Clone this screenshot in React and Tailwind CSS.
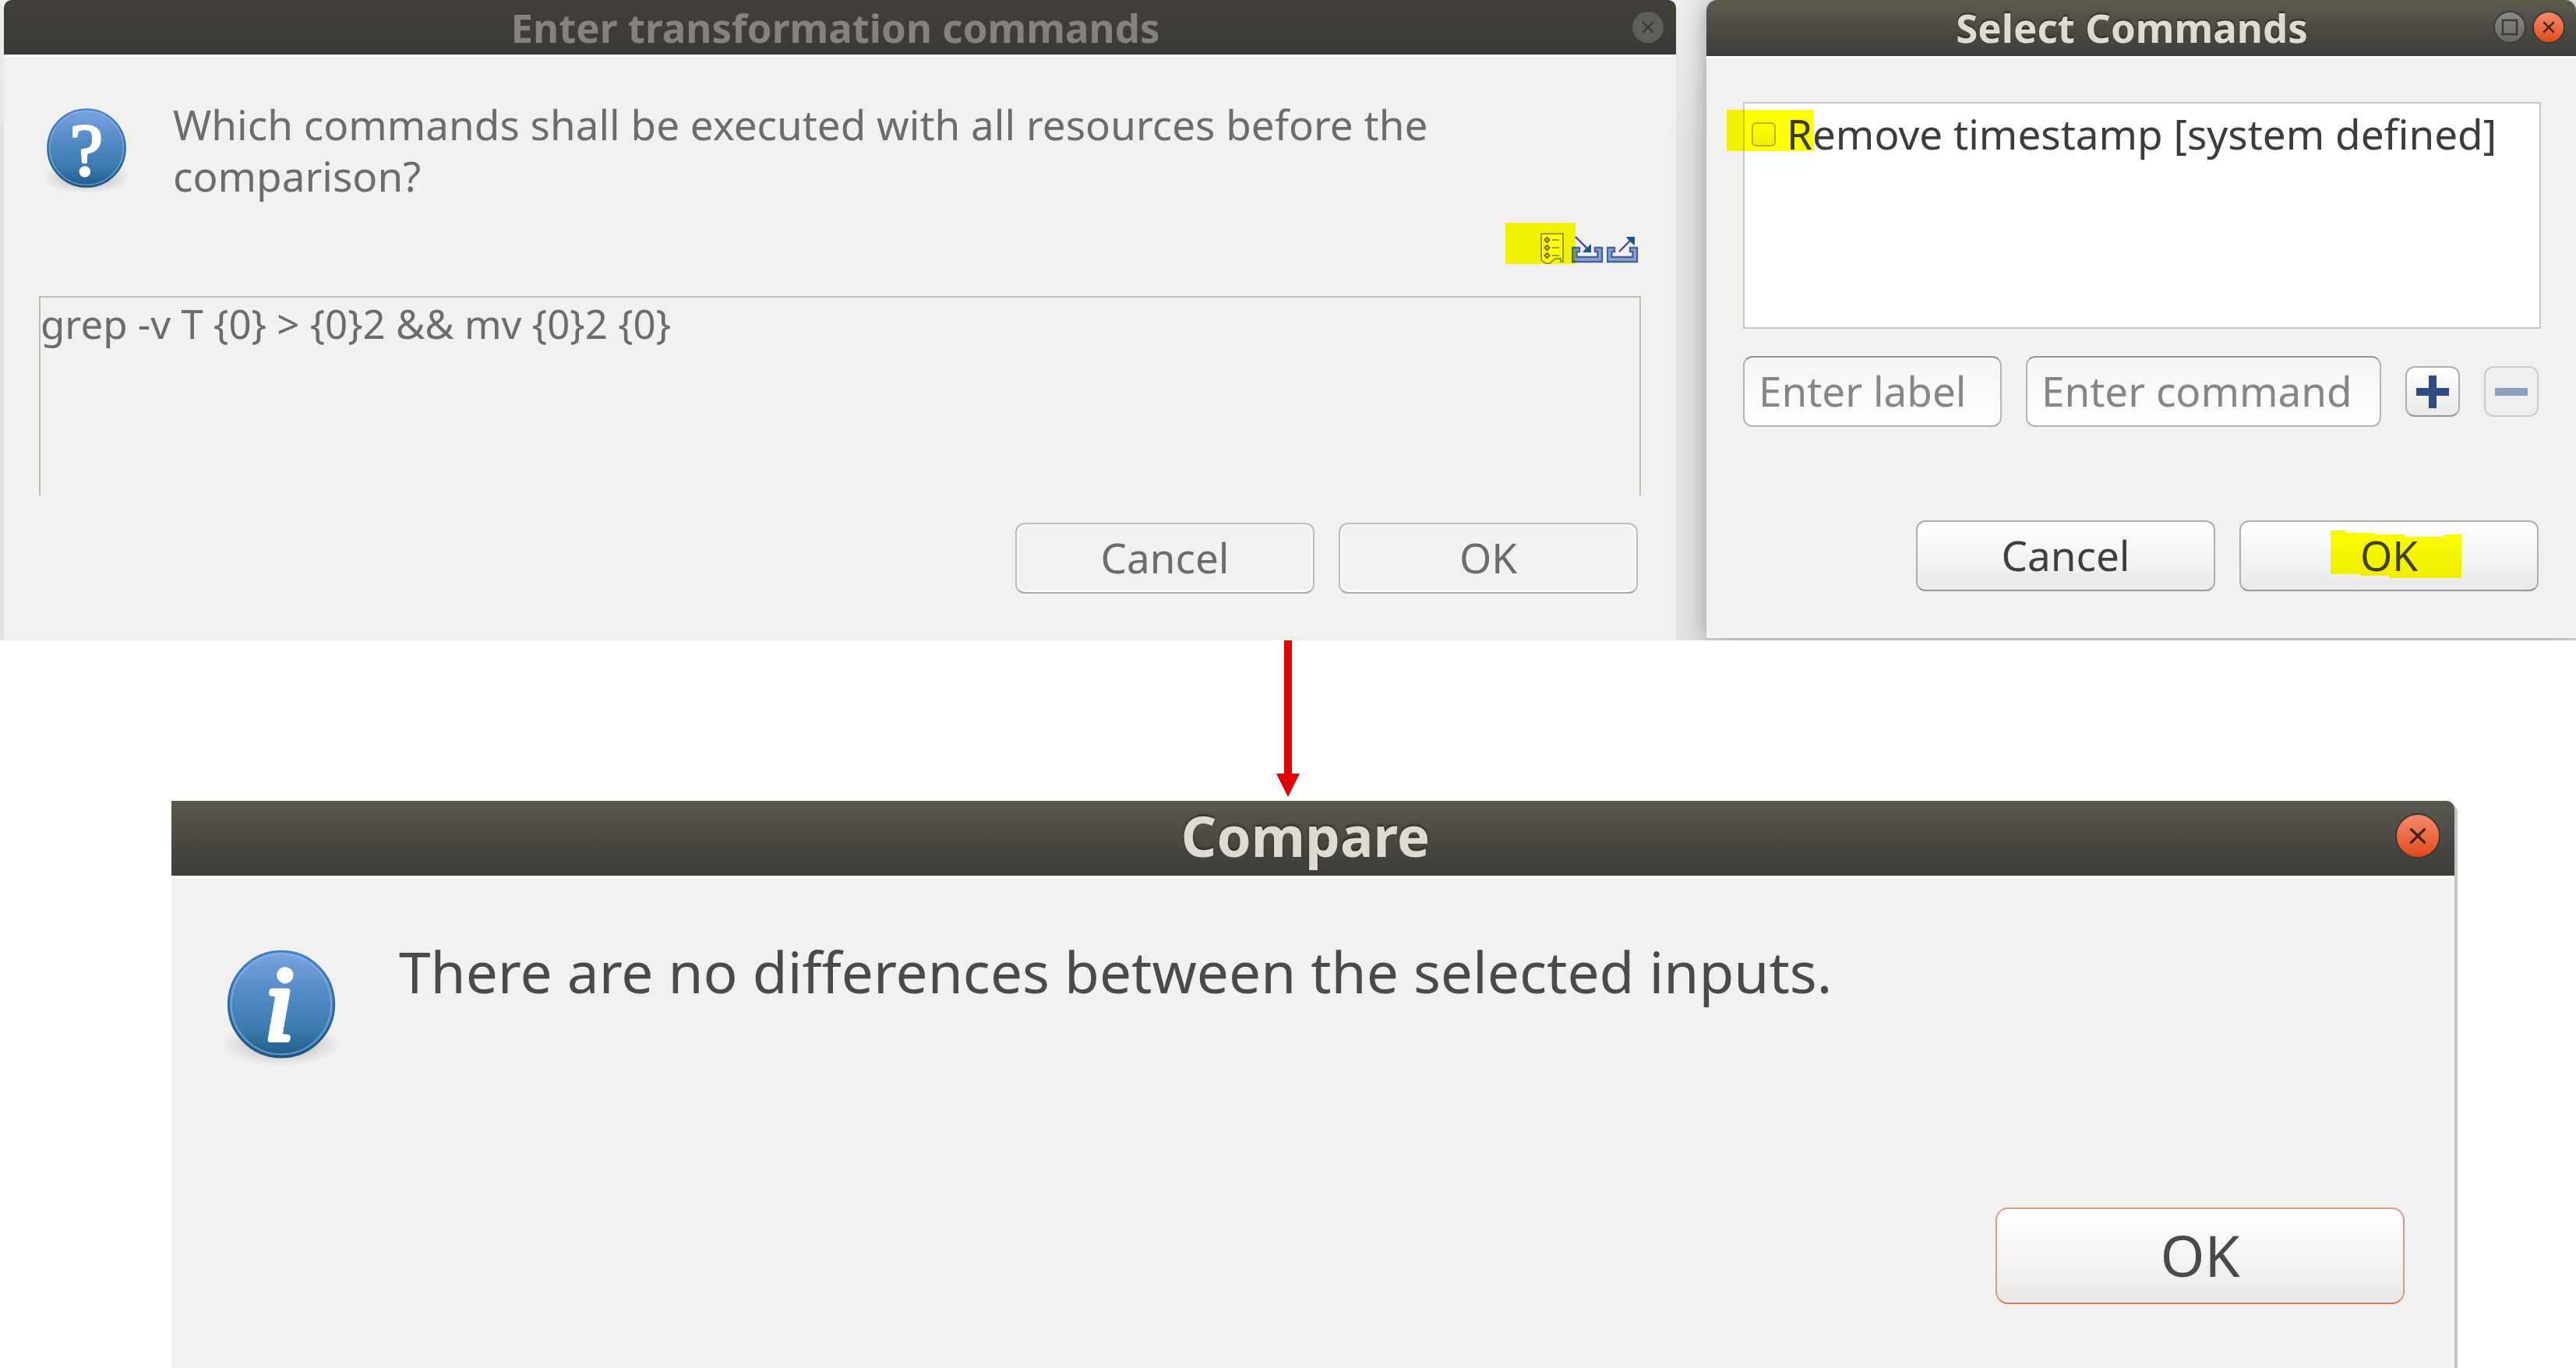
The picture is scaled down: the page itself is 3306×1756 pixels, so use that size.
const highlight = "pointer-events-none absolute bg-[#ffff00] mix-blend-multiply";

function CloseButton({ className, cross }) {
  return (
    <button type="button" aria-label="Close" className={`shrink-0 rounded-full ${className}`}>
      <svg viewBox="0 0 40 40" className="block size-full" fill="none" stroke={cross} strokeWidth="2.4">
        <path d="M13 13 27 27M27 13 13 27" />
      </svg>
    </button>
  );
}

function MaximizeButton() {
  return (
    <button
      type="button"
      aria-label="Maximize"
      className="size-[42px] shrink-0 rounded-full border-2 border-[#3a3934] bg-linear-to-b from-[#8b8a84] to-[#66655f]"
    >
      <svg viewBox="0 0 38 38" className="block size-full" fill="none" stroke="#3a3934" strokeWidth="2.4">
        <rect x="10" y="10" width="18" height="18" />
      </svg>
    </button>
  );
}

function Badge({ id, glyph, className, size, x, y, style, outline }) {
  return (
    <svg viewBox="0 0 120 120" className={`shrink-0 ${className}`} aria-hidden="true">
      <defs>
        <linearGradient id={`${id}-fill`} x1="0" y1="0" x2="0" y2="1">
          <stop offset="0" stopColor="#7ba2e0" />
          <stop offset="0.45" stopColor="#4f88c2" />
          <stop offset="0.75" stopColor="#3a79ae" />
          <stop offset="1" stopColor="#1f5b8a" />
        </linearGradient>
        <linearGradient id={`${id}-rim`} x1="0" y1="0" x2="0" y2="1">
          <stop offset="0" stopColor="#3f7fc4" />
          <stop offset="1" stopColor="#1d5583" />
        </linearGradient>
        <radialGradient id={`${id}-shadow`}>
          <stop offset="0.5" stopColor="#000000" stopOpacity="0.14" />
          <stop offset="1" stopColor="#000000" stopOpacity="0" />
        </radialGradient>
      </defs>
      <ellipse cx="60" cy="97" rx="55" ry="20" fill={`url(#${id}-shadow)`} />
      <circle cx="60" cy="60" r="49" fill={`url(#${id}-fill)`} stroke={`url(#${id}-rim)`} strokeWidth="2" />
      <circle cx="60" cy="60" r="46.5" fill="none" stroke="#8db8e6" strokeOpacity="0.6" strokeWidth="1.5" />
      <text
        x={x}
        y={y}
        fontFamily="'Liberation Serif', serif"
        fontSize={size}
        fontStyle={style}
        textAnchor="middle"
        fill="#ffffff"
        stroke="#ffffff"
        strokeLinejoin="round"
        strokeWidth={outline}
      >
        {glyph}
      </text>
    </svg>
  );
}

function ListIcon() {
  return (
    <svg viewBox="0 0 42 42" className="block size-[42px]" fill="none" stroke="#9c9c90" strokeWidth="2">
      <path d="M6 37V3H34V39H31V35H24L20 38 17 41H12L6 37" fill="#ffffff" />
      {[11, 21, 31].map((cy) => (
        <g key={cy}>
          <path d={`M13.500 ${cy - 3}l3 3-3 3-3-3Z`} stroke="#6b6b60" strokeWidth="2" />
          <path d={`M20 ${cy}H29`} />
        </g>
      ))}
    </svg>
  );
}

function TrayIcon({ children }) {
  return (
    <svg viewBox="0 0 42 42" className="block size-[42px]">
      <path
        d="M1 21H10V26H6.500V33H33.500V26H30V21H39V39H1Z"
        fill="#8ba5d2"
        stroke="#45629f"
        strokeWidth="2.4"
      />
      {children}
    </svg>
  );
}

function PushButton({ children, className }) {
  return (
    <button type="button" className={`relative flex items-center justify-center border-2 ${className}`}>
      {children}
    </button>
  );
}

const dialogButton = "h-[91px] w-[384px] rounded-[12px] pb-[2px] text-[53px] leading-[66px]";
const activeFace = "border-[#b0afad] border-b-[#999896] bg-linear-to-b from-white to-[#eae9e8] text-[#3f3f3f]";
const idleFace = "border-[#bdbcba] border-b-[#a9a8a6] bg-[#f2f1f0] text-[#6c6c6c] shadow-[inset_0_0_0_3px_#f9f9f8]";
const field =
  "h-[91px] w-0 min-w-0 rounded-[12px] border-2 border-[#b5b4b2] border-t-[#949391] bg-linear-to-b from-[#f4f4f4] to-white pr-[8px] pb-[2px] pl-[18px] text-[53px] leading-[66px] text-[#3f3f3f] placeholder:text-[#868686]";

function TransformationDialog() {
  return (
    <section className="flex flex-col bg-[#f2f1ef]">
      <header className="flex h-[73px] items-center rounded-t-[10px] border-b-[3px] border-white bg-linear-to-b from-[#423f3a] to-[#3b3a36] bg-clip-padding pr-[16px] pl-[44px]">
        <h2 className="flex-1 text-center text-[51px] leading-[70px] font-bold text-[#85827b]">
          Enter transformation commands
        </h2>
        <CloseButton className="size-[40px] bg-[#5f5e58]" cross="#3a3934" />
      </header>
      <div className="flex flex-1 flex-col px-[45px] pt-[54px] pb-[60px]">
        <div className="flex items-start">
          <Badge id="question" glyph="?" className="mt-[2px] size-[122px]" size="94" x="60" y="94" outline="3" />
          <p className="ml-[50px] max-w-[1700px] text-[53px] leading-[66px] text-[#6c6c6c]">
            Which commands shall be executed with all resources before the comparison?
          </p>
        </div>
        <div className="relative mt-[27px] flex h-[53px] items-end justify-end gap-[3px] pr-[2px]">
          <button type="button" aria-label="Select commands">
            <ListIcon />
          </button>
          <button type="button" aria-label="Import commands">
            <TrayIcon>
              <path d="M5 7 20 22" stroke="#4a48a4" strokeWidth="2.4" />
              <path d="M25 16V27H14L18 22 21 20Z" fill="#0c5a9c" />
            </TrayIcon>
          </button>
          <button type="button" aria-label="Export commands">
            <TrayIcon>
              <path d="M16 26 30 12" stroke="#4a48a4" strokeWidth="2.4" />
              <path d="M25 7H36V18L32 15 28 11Z" fill="#0c5a9c" />
            </TrayIcon>
          </button>
          <span className={`${highlight} top-0 right-[84px] h-[53px] w-[90px]`} />
        </div>
        <textarea
          aria-label="Transformation commands"
          defaultValue="grep -v T {0} > {0}2 && mv {0}2 {0}"
          className="mt-[41px] block h-[256px] w-full resize-none border-2 border-b-0 border-[#bfbebb] bg-transparent text-[51px] leading-[66px] text-[#6c6c6c]"
        />
        <div className="mt-[35px] flex justify-end gap-[31px] pr-[4px]">
          <PushButton className={`${dialogButton} ${idleFace}`}>Cancel</PushButton>
          <PushButton className={`${dialogButton} ${idleFace}`}>OK</PushButton>
        </div>
      </div>
    </section>
  );
}

function SelectDialog() {
  return (
    <section className="mb-[3px] flex flex-col rounded-t-[14px] bg-[#f2f1ef] shadow-[0_2px_30px_2px_#a0a0a0]">
      <header className="flex h-[75px] items-center gap-[8px] rounded-t-[14px] border-b-[3px] border-white bg-linear-to-b from-[#5d5a50] to-[#3e3d38] bg-clip-padding pr-[14px] pb-[2px] pl-[90px]">
        <h2 className="flex-1 text-center text-[51px] leading-[70px] font-bold text-[#dfdbd2] [text-shadow:0_-2px_2px_#2b2a26]">
          Select Commands
        </h2>
        <MaximizeButton />
        <CloseButton
          className="size-[42px] border-2 border-[#3a3934] bg-linear-to-b from-[#f58a69] to-[#df4a16]"
          cross="#43200f"
        />
      </header>
      <div className="flex flex-1 flex-col pt-[56px] pr-[45px] pb-[60px] pl-[47px]">
        <div className="relative h-[291px] border-2 border-[#c8c7c4] bg-white pt-[6px] pl-[9px]">
          <label className="flex items-center gap-[14px] text-[53px] leading-[66px] whitespace-nowrap text-[#3c3c3c]">
            <input
              type="checkbox"
              className="size-[31px] shrink-0 appearance-none rounded-[6px] border-2 border-[#b4b4b0] bg-linear-to-b from-white to-[#f0f0f0]"
            />
            Remove timestamp [system defined]
          </label>
          <span className={`${highlight} top-[8px] left-[-23px] h-[53px] w-[112px]`} />
        </div>
        <div className="mt-[35px] flex items-center gap-[31px] pr-[3px]">
          <input type="text" aria-label="Label" placeholder="Enter label" className={`${field} flex-[302]`} />
          <input type="text" aria-label="Command" placeholder="Enter command" className={`${field} flex-[426]`} />
          <button
            type="button"
            aria-label="Add command"
            className="flex h-[65px] w-[70px] shrink-0 items-center justify-center rounded-[12px] border-2 border-[#b0afad] border-b-[#999896] bg-linear-to-b from-white to-[#eae9e8]"
          >
            <svg viewBox="0 0 42 42" className="size-[42px]" fill="#2f4b85">
              <path d="M16 0h10v16h16v10H26v16H16V26H0V16h16Z" />
            </svg>
          </button>
          <button
            type="button"
            aria-label="Remove command"
            className="flex h-[65px] w-[70px] shrink-0 items-center justify-center rounded-[12px] border-2 border-[#cdcccb] bg-[#eeeeee]"
          >
            <svg viewBox="0 0 42 42" className="size-[42px]" fill="#92a0bf">
              <path d="M0 16h42v10H0Z" />
            </svg>
          </button>
        </div>
        <div className="mt-[120px] flex justify-end gap-[31px] pr-[3px]">
          <PushButton className={`${dialogButton} ${activeFace}`}>Cancel</PushButton>
          <PushButton className={`${dialogButton} ${activeFace}`}>
            OK
            <svg
              viewBox="0 0 168 61"
              className="pointer-events-none absolute top-[11px] left-[115px] h-[61px] w-[168px] mix-blend-multiply"
              fill="#ffff00"
              aria-hidden="true"
            >
              <path d="M0 0H20V3H57V5H95V8H146V5H168V61H75V58H38V56H0Z" />
            </svg>
          </PushButton>
        </div>
      </div>
    </section>
  );
}

function CompareDialog() {
  return (
    <section className="mr-[156px] ml-[220px] flex flex-1 flex-col rounded-tr-[10px] bg-[#f2f1ef] shadow-[4px_4px_0_0_#c4c4c4]">
      <header className="flex h-[100px] items-center rounded-tr-[10px] border-b-4 border-white bg-linear-to-b from-[#5b584f] to-[#3d3c37] bg-clip-padding pr-[18px] pb-[7px] pl-[57px]">
        <h2 className="flex-1 text-center text-[71px] leading-[88px] font-bold text-[#dfdbd2] [text-shadow:0_-2px_3px_#2b2a26]">
          Compare
        </h2>
        <CloseButton
          className="size-[58px] border-2 border-[#3a3934] bg-linear-to-b from-[#f58a69] to-[#df4a16]"
          cross="#43200f"
        />
      </header>
      <div className="flex flex-1 flex-col pt-[75px] pr-[64px] pb-[82px] pl-[58px]">
        <div className="flex items-start">
          <Badge
            id="info"
            glyph="i"
            className="mt-[3px] size-[166px]"
            size="98"
            x="58"
            y="93"
            style="italic"
            outline="5"
          />
          <p className="ml-[68px] text-[73px] leading-[88px] text-[#4a4a4a]">
            There are no differences between the selected inputs.
          </p>
        </div>
        <div className="mt-[178px] flex justify-end">
          <PushButton className="h-[124px] w-[525px] rounded-[16px] border-[#dc9c83] border-b-[#d07a5a] bg-linear-to-b from-white to-[#eae9e8] pb-[2px] text-[73px] leading-[88px] text-[#4a4a4a]">
            OK
          </PushButton>
        </div>
      </div>
    </section>
  );
}

export default function App() {
  return (
    <main className="flex min-h-screen flex-col overflow-hidden bg-white font-['Noto_Sans',sans-serif]">
      <div className="grid grid-cols-[minmax(0,2146fr)_minmax(0,1116fr)] gap-x-[39px] overflow-hidden bg-linear-to-b from-[#eeeeee] via-[#e2e2e2] via-25% to-[#e2e2e2] pl-[5px]">
        <TransformationDialog />
        <SelectDialog />
      </div>
      <svg viewBox="0 0 30 201" className="mx-auto mb-[5px] block h-[201px] w-[30px]" fill="#e30000" aria-hidden="true">
        <path d="M10 0H20V171H30L15 201 0 171H10Z" />
      </svg>
      <CompareDialog />
    </main>
  );
}
